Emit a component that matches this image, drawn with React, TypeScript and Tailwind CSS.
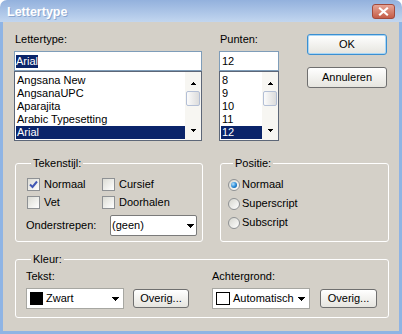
import React from 'react';

const FONT = "font-['Liberation_Sans',Arial,sans-serif]";

function cn(...c: (string | false | undefined)[]) {
  return c.filter(Boolean).join(' ');
}

function Arrow({ up = false, size = 7 }: { up?: boolean; size?: 5 | 7 }) {
  const rows = size === 7 ? [7, 5, 3, 1] : [5, 3, 1];
  const ordered = up ? [...rows].reverse() : rows;
  return (
    <svg width={size} height={rows.length} className="block" shapeRendering="crispEdges">
      {ordered.map((w, i) => (
        <rect key={i} x={(size - w) / 2} y={i} width={w} height={1} fill="#000" />
      ))}
    </svg>
  );
}

function ScrollBar() {
  return (
    <div className="flex w-[16px] flex-col items-center bg-[#f7f6f2] pt-[10px] pb-[8px]">
      <Arrow up size={5} />
      <div className="mt-[6px] h-[15px] w-[14px] rounded-[2px] border border-[#b3bfd6] bg-gradient-to-r from-[#fbfbfb] to-[#dcdcdc]" />
      <div className="flex-1" />
      <Arrow size={5} />
    </div>
  );
}

function ListBox({ items, selected }: { items: string[]; selected: string }) {
  return (
    <div className="flex h-[70px] border border-[#5d6778] bg-white">
      <div className="flex-1 pt-[2px] pl-[1px]">
        {items.map((it) => (
          <div
            key={it}
            className={`h-[13px] pl-[1px] leading-[13px] ${it === selected ? 'bg-[#0a246a] text-white' : ''}`}
          >
            {it}
          </div>
        ))}
      </div>
      <ScrollBar />
    </div>
  );
}

function Button({ label, w, h = 'h-[21px]', isDefault = false }: { label: string; w: string; h?: string; isDefault?: boolean }) {
  return (
    <button
      className={cn(
        'flex items-center justify-center rounded-[3px] border bg-gradient-to-b from-white to-[#e6e5df] leading-[13px] text-black',
        w,
        h,
        isDefault ? 'border-[#3b8fd1] shadow-[inset_0_0_0_1px_#a9d6f5]' : 'border-[#6f6f6f]',
      )}
    >
      {label}
    </button>
  );
}

function CheckBox({ label, checked = false }: { label: string; checked?: boolean }) {
  return (
    <div className="flex h-[13px] items-center gap-[4px]">
      <div className="flex h-[13px] w-[13px] items-center justify-center border border-[#8e9194] bg-gradient-to-br from-[#dcdcd5] to-white">
        {checked && (
          <svg width="11" height="11" viewBox="0 0 11 11">
            <path d="M2 5.5 L4.5 8 L9 2.5" fill="none" stroke="#4157b4" strokeWidth="2" />
          </svg>
        )}
      </div>
      <span className="leading-[13px]">{label}</span>
    </div>
  );
}

function Radio({ label, checked = false }: { label: string; checked?: boolean }) {
  return (
    <div className="flex h-[13px] items-center gap-[2px]">
      <div className="flex h-[12px] w-[12px] items-center justify-center rounded-full border border-[#8f9294] bg-gradient-to-br from-[#d6d6cf] to-white">
        {checked && (
          <div className="h-[6px] w-[6px] rounded-full bg-[radial-gradient(circle_at_35%_35%,#b6e3ff,#2386d4_55%,#0b4d8c)]" />
        )}
      </div>
      <span className="leading-[13px]">{label}</span>
    </div>
  );
}

function Combo({ w, border, children, arrowMr = 'mr-[4px]' }: { w: string; border: string; children: React.ReactNode; arrowMr?: string }) {
  return (
    <div className={cn('flex h-[21px] items-center bg-white', w, border)}>
      {children}
      <div className={cn('ml-auto', arrowMr)}>
        <Arrow />
      </div>
    </div>
  );
}

function Group({ title, className, children }: { title: string; className: string; children: React.ReactNode }) {
  return (
    <fieldset className={cn('rounded-[3px] border border-white', className)}>
      <legend className="ml-[5px] px-[2px] leading-[13px]">{title}</legend>
      {children}
    </fieldset>
  );
}

export default function App() {
  return (
    <div className={cn('flex h-[334px] w-[402px] flex-col bg-white text-[11px] text-black', FONT)}>
      {/* Title bar */}
      <div className="flex h-[22px] items-center rounded-t-[7px] bg-gradient-to-b from-[#93b1dd] to-[#c2d6ef] pr-[7px] pl-[7px]">
        <span className="pt-[2px] text-[12.5px] font-bold leading-[15px] text-white [text-shadow:1px_1px_0_#8aa6cf]">
          Lettertype
        </span>
        <div className="ml-auto flex h-[15px] w-[23px] items-center justify-center rounded-[3px] border border-[#a24a3c] bg-gradient-to-b from-[#e6a596] to-[#c45c48]">
          <svg width="11" height="9" viewBox="0 0 11 9">
            <path d="M2 1.5 L9 7.5 M9 1.5 L2 7.5" stroke="#fff" strokeWidth="2.2" strokeLinecap="square" />
          </svg>
        </div>
      </div>

      {/* Body */}
      <div className="flex flex-1 flex-col border-x-[3px] border-b-[3px] border-[#8fb4e4] bg-[#d4d0c8] pt-[11px] pl-[11px]">
        <div className="flex items-start">
          <div className="flex w-[188px] flex-col">
            <span className="h-[13px] pl-[1px] leading-[13px]">Lettertype:</span>
            <div className="mt-[5px] flex h-[20px] items-center border border-[#7f9db9] bg-white pl-[1px]">
              <span className="bg-[#0a246a] leading-[13px] text-white">Arial</span>
            </div>
            <ListBox
              items={['Angsana New', 'AngsanaUPC', 'Aparajita', 'Arabic Typesetting', 'Arial']}
              selected="Arial"
            />
          </div>

          <div className="ml-[17px] flex w-[60px] flex-col">
            <span className="h-[13px] pl-[1px] leading-[13px]">Punten:</span>
            <div className="mt-[5px] flex h-[20px] items-center border border-[#7f9db9] bg-white pl-[2px]">
              <span className="leading-[13px]">12</span>
            </div>
            <ListBox items={['8', '9', '10', '11', '12']} selected="12" />
          </div>

          <div className="ml-[28px] flex flex-col gap-[12px] pt-[1px]">
            <Button label="OK" w="w-[80px]" isDefault />
            <Button label="Annuleren" w="w-[80px]" />
          </div>
        </div>

        <div className="mt-[16px] flex">
          <Group title="Tekenstijl:" className="ml-[1px] w-[188px] pt-[8px] pr-[5px] pb-[5px] pl-[10px]">
            <div className="grid grid-cols-[75px_1fr] gap-y-[5px] pl-[1px]">
              <CheckBox label="Normaal" checked />
              <CheckBox label="Cursief" />
              <CheckBox label="Vet" />
              <CheckBox label="Doorhalen" />
            </div>
            <div className="mt-[6px] flex items-center justify-between">
              <span className="leading-[13px]">Onderstrepen:</span>
              <Combo w="w-[87px]" border="border border-[#7a7a7a] rounded-[2px]" arrowMr="mr-[2px]">
                <span className="pl-[1px] leading-[13px]">(geen)</span>
              </Combo>
            </div>
          </Group>

          <Group title="Positie:" className="ml-[17px] w-[169px] pt-[8px] pl-[7px]">
            <div className="flex flex-col gap-[6px]">
              <Radio label="Normaal" checked />
              <Radio label="Superscript" />
              <Radio label="Subscript" />
            </div>
          </Group>
        </div>

        <Group title="Kleur:" className="mt-[11px] ml-[1px] w-[374px] pt-[4px] pb-[8px] pl-[10px]">
          <div className="flex">
            <div className="flex flex-col">
              <span className="leading-[13px]">Tekst:</span>
              <div className="mt-[5px] flex items-center">
                <Combo w="w-[98px]" border="border border-[#a7a7a2]">
                  <div className="ml-[3px] h-[13px] w-[13px] bg-black" />
                  <span className="ml-[3px] leading-[13px]">Zwart</span>
                </Combo>
                <div className="ml-[9px]">
                  <Button label="Overig..." w="w-[56px]" h="h-[19px]" />
                </div>
              </div>
            </div>
            <div className="ml-[23px] flex flex-col">
              <span className="leading-[13px]">Achtergrond:</span>
              <div className="mt-[5px] flex items-center">
                <Combo w="w-[98px]" border="border border-[#a7a7a2]">
                  <div className="ml-[3px] h-[13px] w-[14px] border border-black bg-white" />
                  <span className="ml-[3px] leading-[13px]">Automatisch</span>
                </Combo>
                <div className="ml-[10px]">
                  <Button label="Overig..." w="w-[57px]" h="h-[19px]" />
                </div>
              </div>
            </div>
          </div>
        </Group>
      </div>
    </div>
  );
}
